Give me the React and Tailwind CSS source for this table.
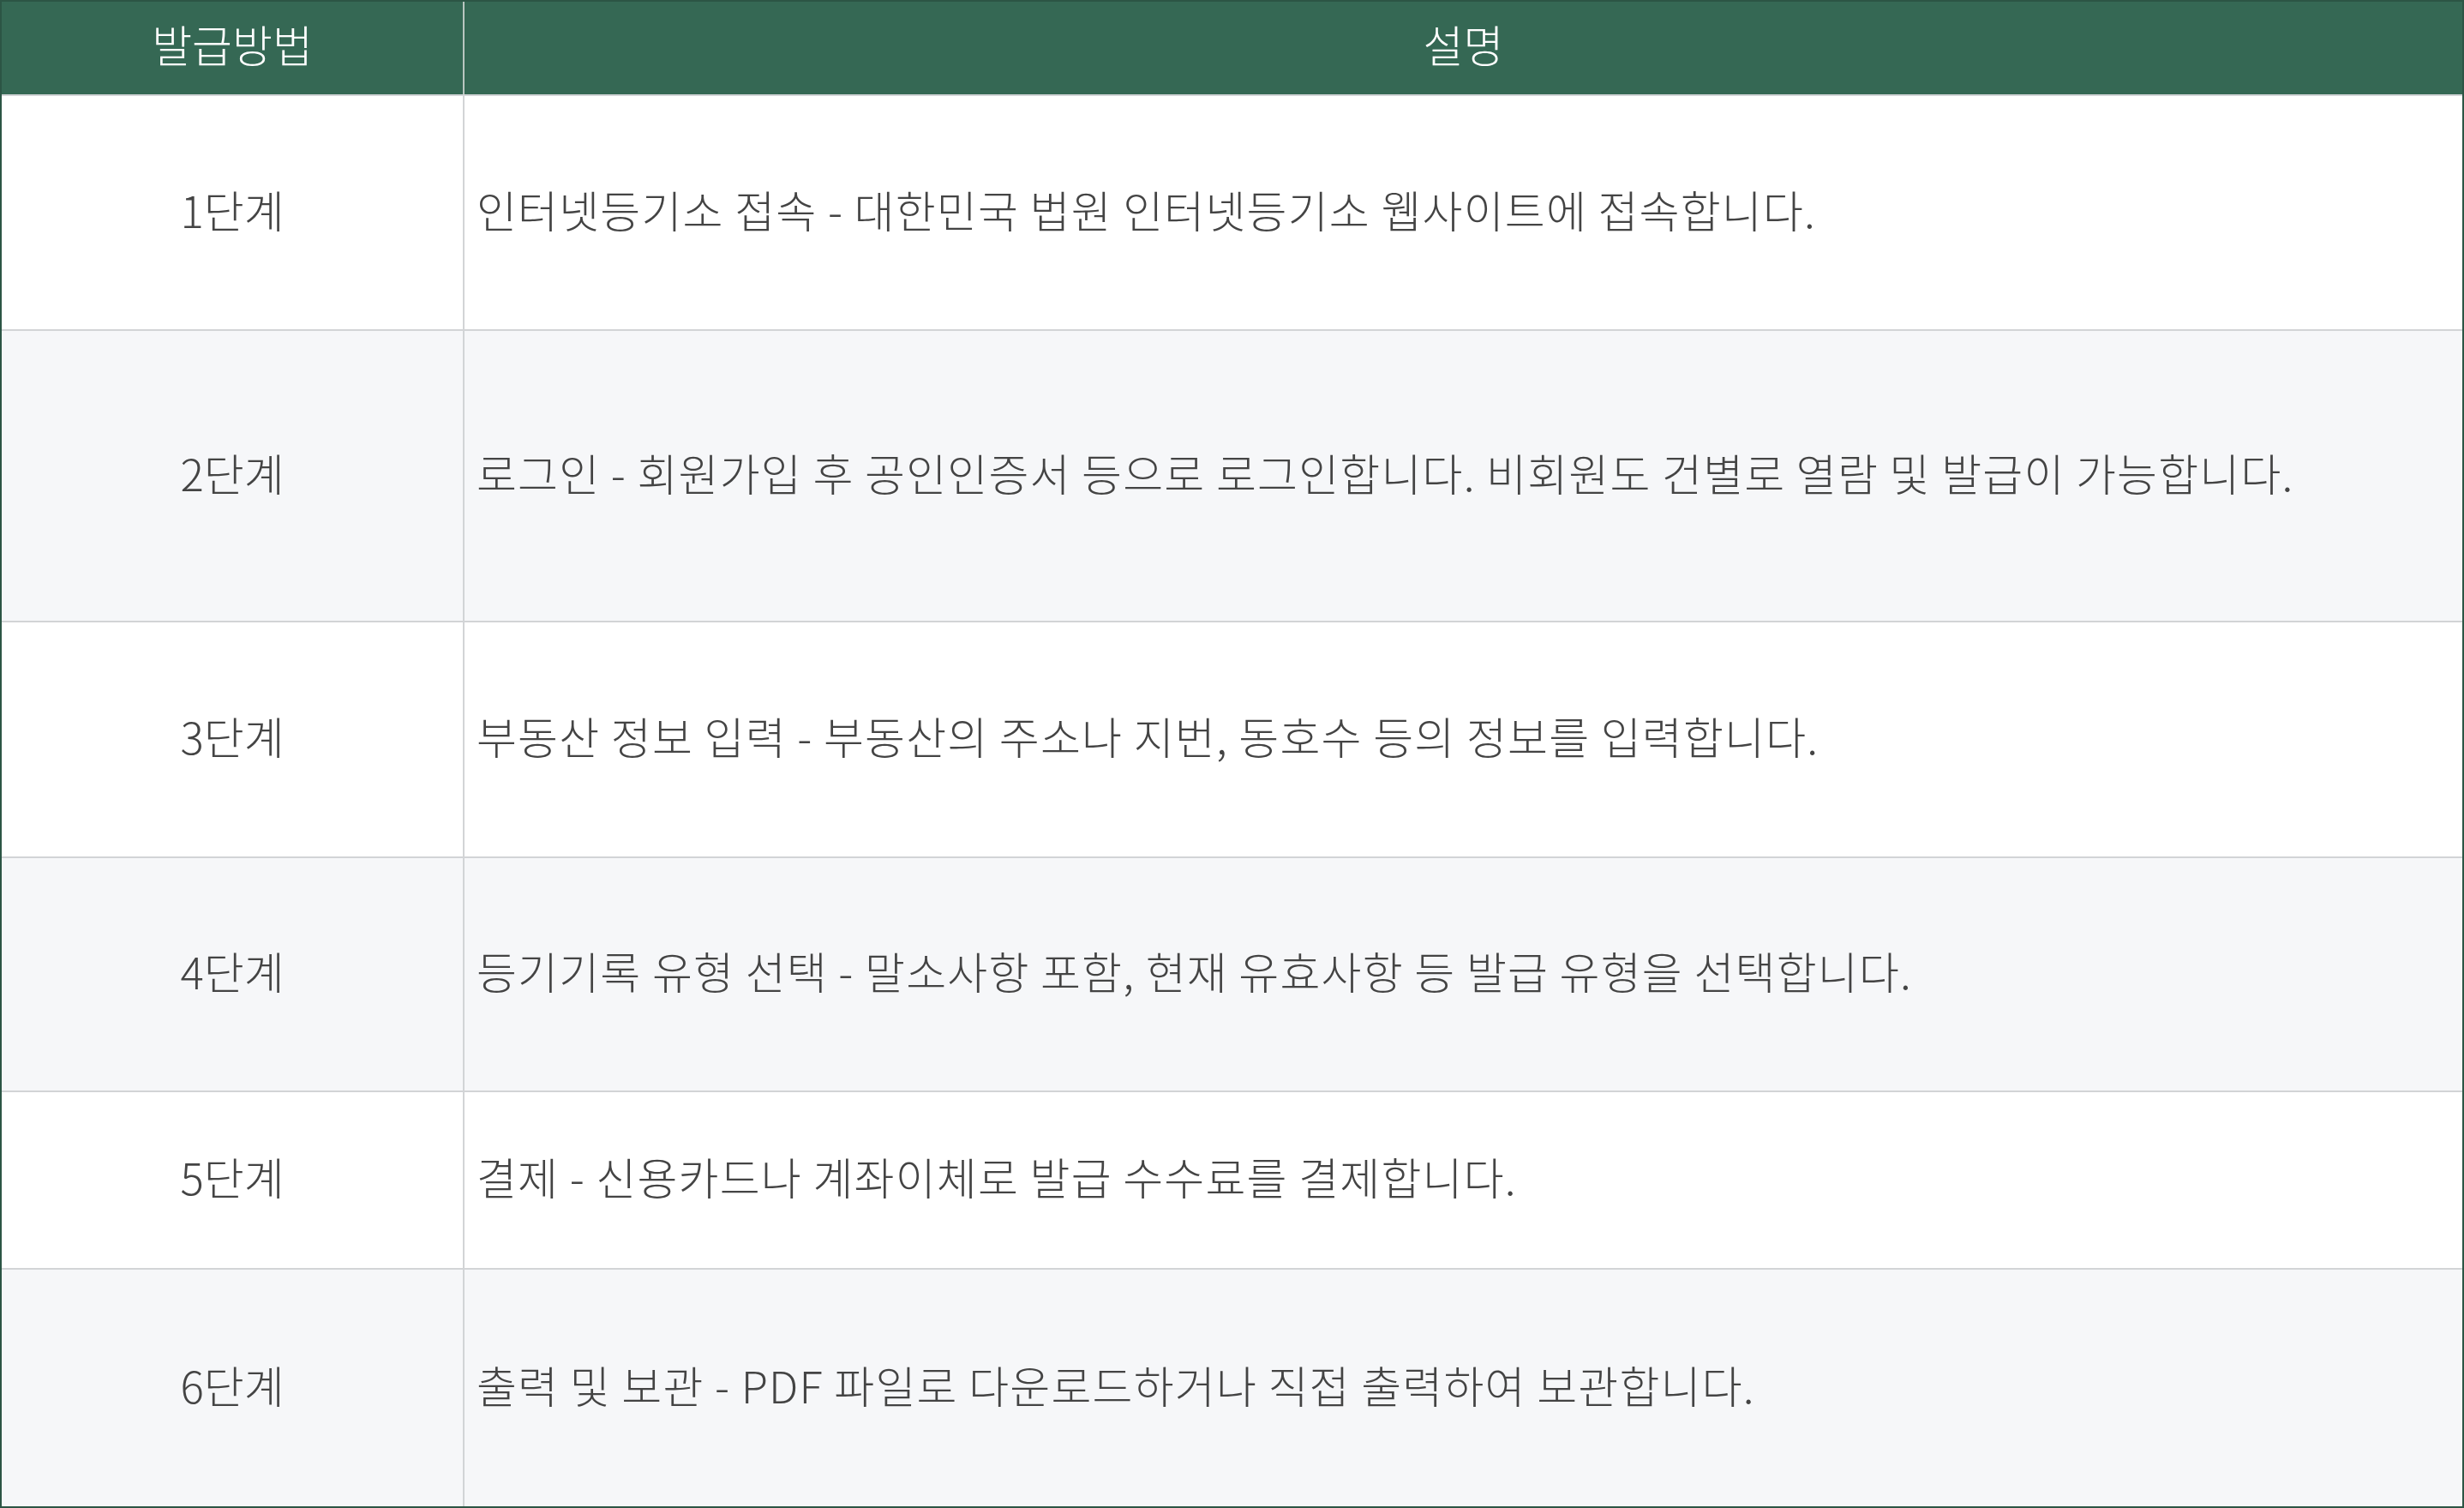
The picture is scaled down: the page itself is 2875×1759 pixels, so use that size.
// 등기부등본 발급방법 표
const steps = [
  { step: '1단계', desc: '인터넷등기소 접속 - 대한민국 법원 인터넷등기소 웹사이트에 접속합니다.', h: 'h-[274px]', bg: 'bg-white' },
  { step: '2단계', desc: '로그인 - 회원가입 후 공인인증서 등으로 로그인합니다. 비회원도 건별로 열람 및 발급이 가능합니다.', h: 'h-[340px]', bg: 'bg-[#f6f7f9]' },
  { step: '3단계', desc: '부동산 정보 입력 - 부동산의 주소나 지번, 동호수 등의 정보를 입력합니다.', h: 'h-[275px]', bg: 'bg-white' },
  { step: '4단계', desc: '등기기록 유형 선택 - 말소사항 포함, 현재 유효사항 등 발급 유형을 선택합니다.', h: 'h-[273px]', bg: 'bg-[#f6f7f9]' },
  { step: '5단계', desc: '결제 - 신용카드나 계좌이체로 발급 수수료를 결제합니다.', h: 'h-[207px]', bg: 'bg-white' },
  { step: '6단계', desc: '출력 및 보관 - PDF 파일로 다운로드하거나 직접 출력하여 보관합니다.', h: 'h-[278px]', bg: 'bg-[#f6f7f9]' },
]

export default function App() {
  return (
    <div className="w-[2875px] h-[1759px] border-2 border-[#2c5545] font-['Noto_Sans_CJK_KR',sans-serif] font-light text-[51px] overflow-hidden">
      {/* 헤더 */}
      <div className="grid grid-cols-[538px_1fr] h-[108px] bg-[#356854] text-white">
        <div className="flex items-center justify-center pb-[10px]">발급방법</div>
        <div className="flex items-center justify-center border-l-2 border-[#b9c6c0] pb-[10px]">설명</div>
      </div>

      {steps.map((s) => (
        <div
          key={s.step}
          className={`grid grid-cols-[538px_1fr] border-t-2 border-[#d2d4d6] text-[#444444] ${s.h} ${s.bg}`}
        >
          <div className="flex items-center justify-center pb-[8px]">{s.step}</div>
          <div className="flex items-center border-l-2 border-[#d2d4d6] pl-[14px] pb-[8px] tracking-[1.2px]">{s.desc}</div>
        </div>
      ))}
    </div>
  )
}
